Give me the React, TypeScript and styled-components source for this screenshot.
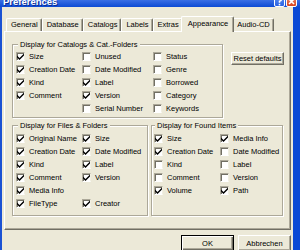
import React from "react";
import styled, { createGlobalStyle } from "styled-components";

const GlobalStyle = createGlobalStyle`
  html, body { margin: 0; padding: 0; background: #ECE9D8; }
  * { box-sizing: border-box; }
`;

const Window = styled.div`
  width: 300px;
  height: 250px;
  overflow: hidden;
  display: flex;
  flex-direction: column;
  font-family: "Liberation Sans", Arial, sans-serif;
  font-size: 7.5px;
  color: #000;
`;

const TitleBar = styled.div`
  height: 7px;
  flex: none;
  display: flex;
  align-items: flex-end;
  overflow: hidden;
  padding: 0 3px 1px 3px;
  background: linear-gradient(#3A6FE4, #0C4AD4);
`;

const TitleText = styled.div`
  flex: 1;
  font-weight: bold;
  font-size: 9.5px;
  line-height: 9.5px;
  color: #fff;
  text-shadow: 1px 1px 0 #0A2A90;
  white-space: nowrap;
`;

const CaptionButton = styled.div<{ $kind: "help" | "close" }>`
  flex: none;
  width: 11px;
  height: 11px;
  margin-left: 1px;
  margin-bottom: -1px;
  border: 1px solid #fff;
  border-radius: 2px;
  display: flex;
  align-items: center;
  justify-content: center;
  background: ${(p) => (p.$kind === "close" ? "linear-gradient(#E88A6C, #D8431E)" : "linear-gradient(#5B8EF0, #2A62E2)")};
`;

const Body = styled.div`
  flex: 1;
  display: flex;
  flex-direction: column;
  background: #ECE9D8;
  border-left: 2px solid #1B52D3;
  border-right: 7px solid #0A49D5;
  padding: 9px 2px 0 2px;
`;

const TabStrip = styled.div`
  display: flex;
  align-items: flex-end;
  padding-left: 2px;
  position: relative;
  z-index: 1;
`;

const Tab = styled.div<{ $active?: boolean }>`
  position: relative;
  z-index: ${(p) => (p.$active ? 2 : 1)};
  height: ${(p) => (p.$active ? 16 : 13)}px;
  margin: ${(p) => (p.$active ? "0 -2px -1px -2px" : "0")};
  padding: ${(p) => (p.$active ? "1px 5px 0 6px" : "0 3px 0 4px")};
  border-top: 1px solid #fff;
  border-left: 1px solid #fff;
  border-right: 1px solid #716F64;
  box-shadow: inset -1px 0 0 #ACA899;
  border-radius: 2px 2px 0 0;
  background: #ECE9D8;
  line-height: 11px;
  white-space: nowrap;
`;

const Panel = styled.div`
  height: 199px;
  flex: none;
  border-top: 1px solid #fff;
  border-left: 1px solid #fff;
  border-right: 1px solid #716F64;
  border-bottom: 1px solid #716F64;
  box-shadow: inset -1px -1px 0 #ACA899;
  padding: 8px 6px 0 7px;
  display: flex;
  flex-direction: column;
  gap: 3px;
`;

const TopRow = styled.div`
  display: flex;
  align-items: flex-start;
  justify-content: space-between;
`;

const BottomRow = styled.div`
  display: grid;
  grid-template-columns: 136px 132px;
  gap: 3px;
`;

const Group = styled.div<{ $width?: number; $pad: string }>`
  position: relative;
  margin-top: 4px;
  ${(p) => (p.$width ? `width: ${p.$width}px;` : "")}
  border: 1px solid #ACA899;
  box-shadow: 1px 1px 0 #fff, inset 1px 1px 0 #fff;
  padding: ${(p) => p.$pad};
`;

const Legend = styled.div<{ $left: number }>`
  position: absolute;
  top: -5px;
  left: ${(p) => p.$left}px;
  padding: 0 2px;
  background: #ECE9D8;
  line-height: 9px;
  white-space: nowrap;
`;

const Grid = styled.div<{ $cols: string }>`
  display: grid;
  grid-template-columns: ${(p) => p.$cols};
  grid-auto-rows: 13px;
`;

const CheckRow = styled.div`
  display: flex;
  align-items: center;
  gap: 4px;
  white-space: nowrap;
`;

const Box = styled.div`
  flex: none;
  width: 9px;
  height: 9px;
  background: #fff;
  border-top: 1px solid #ACA899;
  border-left: 1px solid #ACA899;
  border-bottom: 1px solid #fff;
  border-right: 1px solid #F1EFE2;
  box-shadow: inset 1px 1px 0 #716F64;
  display: flex;
  align-items: center;
  justify-content: center;
`;

const Button = styled.button<{ $w: number; $h: number; $default?: boolean }>`
  flex: none;
  width: ${(p) => p.$w}px;
  height: ${(p) => p.$h}px;
  padding: 0;
  font-family: inherit;
  font-size: 7.5px;
  color: #000;
  white-space: nowrap;
  background: #ECE9D8;
  border: 1px solid;
  border-color: ${(p) => (p.$default ? "#000" : "#fff #716F64 #716F64 #fff")};
  box-shadow: ${(p) =>
    p.$default
      ? "inset 1px 1px 0 #fff, inset -1px -1px 0 #716F64, inset -2px -2px 0 #ACA899"
      : "inset -1px -1px 0 #ACA899"};
`;

const ResetButton = styled(Button)`
  margin-top: 12px;
`;

const Footer = styled.div`
  display: flex;
  justify-content: flex-end;
  gap: 4px;
  padding-top: 5px;
`;

type Item = [string, boolean] | null;

const Check = ({ item }: { item: Item }) => {
  if (!item) return <div />;
  const [label, on] = item;
  return (
    <CheckRow>
      <Box>
        {on && (
          <svg width="7" height="7" viewBox="0 0 7 7">
            <path d="M0 2.5 L2.5 5 L7 0.5 L7 2.5 L2.5 7 L0 4.5 Z" fill="#000" />
          </svg>
        )}
      </Box>
      <span>{label}</span>
    </CheckRow>
  );
};

const catalogs: Item[] = [
  ["Size", true], ["Unused", false], ["Status", false],
  ["Creation Date", true], ["Date Modified", false], ["Genre", false],
  ["Kind", true], ["Label", true], ["Borrowed", false],
  ["Comment", true], ["Version", true], ["Category", false],
  null, ["Serial Number", false], ["Keywords", false],
];

const files: Item[] = [
  ["Original Name", true], ["Size", true],
  ["Creation Date", true], ["Date Modified", true],
  ["Kind", true], ["Label", true],
  ["Comment", true], ["Version", true],
  ["Media Info", true], null,
  ["FileType", true], ["Creator", true],
];

const found: Item[] = [
  ["Size", true], ["Media Info", true],
  ["Creation Date", true], ["Date Modified", false],
  ["Kind", false], ["Label", false],
  ["Comment", false], ["Version", false],
  ["Volume", true], ["Path", true],
];

const tabs = ["General", "Database", "Catalogs", "Labels", "Extras", "Appearance", "Audio-CD"];

export default function App() {
  return (
    <>
      <GlobalStyle />
      <Window>
        <TitleBar>
          <TitleText>Preferences</TitleText>
          <CaptionButton $kind="help">
            <svg width="7" height="9" viewBox="0 0 7 9">
              <path d="M1.5 2.5 Q1.5 0.5 3.5 0.5 Q5.5 0.5 5.5 2.3 Q5.5 3.6 3.5 4.3 L3.5 5.8" stroke="#fff" strokeWidth="1.5" fill="none" />
              <rect x="2.7" y="6.8" width="1.6" height="1.6" fill="#fff" />
            </svg>
          </CaptionButton>
          <CaptionButton $kind="close">
            <svg width="7" height="7" viewBox="0 0 7 7">
              <path d="M1 1 L6 6 M6 1 L1 6" stroke="#fff" strokeWidth="1.6" />
            </svg>
          </CaptionButton>
        </TitleBar>
        <Body>
          <TabStrip>
            {tabs.map((t) => (
              <Tab key={t} $active={t === "Appearance"}>
                {t}
              </Tab>
            ))}
          </TabStrip>
          <Panel>
            <TopRow>
              <Group $width={211} $pad="5px 0 2px 3px">
                <Legend $left={5}>Display for Catalogs &amp; Cat.-Folders</Legend>
                <Grid $cols="66px 71px 1fr">
                  {catalogs.map((it, i) => (
                    <Check key={i} item={it} />
                  ))}
                </Grid>
              </Group>
              <ResetButton $w={53} $h={13}>Reset defaults</ResetButton>
            </TopRow>
            <BottomRow>
              <Group $pad="6px 0 5px 3px">
                <Legend $left={5}>Display for Files &amp; Folders</Legend>
                <Grid $cols="66px 1fr">
                  {files.map((it, i) => (
                    <Check key={i} item={it} />
                  ))}
                </Grid>
              </Group>
              <Group $pad="6px 0 5px 2px">
                <Legend $left={3}>Display for Found Items</Legend>
                <Grid $cols="66px 1fr">
                  {found.map((it, i) => (
                    <Check key={i} item={it} />
                  ))}
                </Grid>
              </Group>
            </BottomRow>
          </Panel>
          <Footer>
            <Button $w={53} $h={16} $default>OK</Button>
            <Button $w={53} $h={16}>Abbrechen</Button>
          </Footer>
        </Body>
      </Window>
    </>
  );
}
